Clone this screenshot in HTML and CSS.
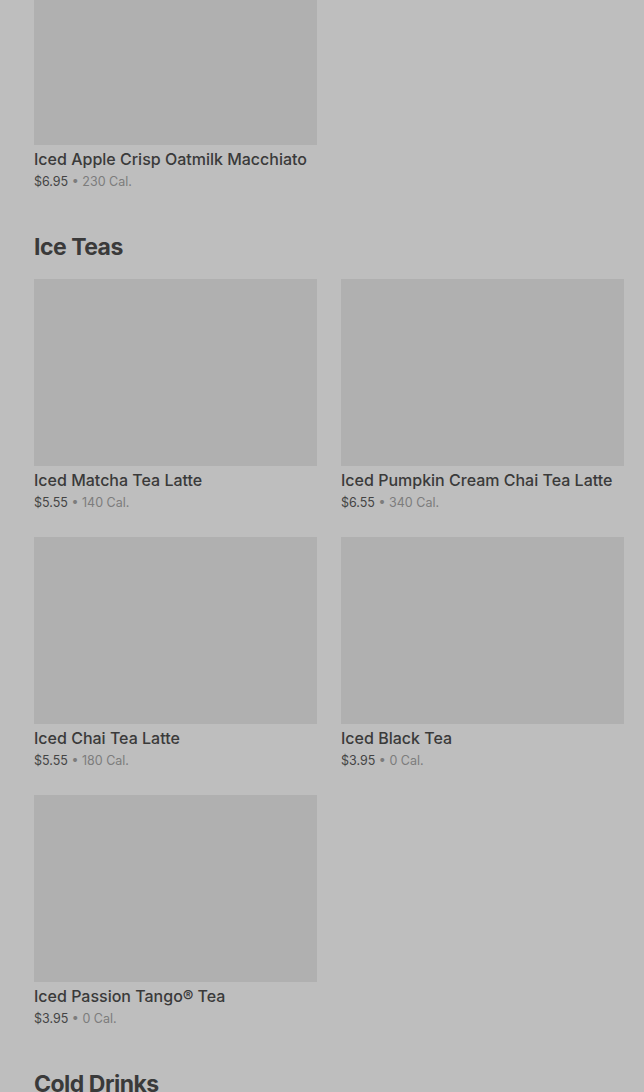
FILE: index.html
```html
<!DOCTYPE html>
<html lang="en">
<head>
    <meta charset="UTF-8">
    <title>Menu</title>
    <link rel="stylesheet" href="styles.css">
</head>
<body>
    <div class="menu">
        <section class="section first">
            <div class="grid">
                <div class="item">
                    <div class="thumb"></div>
                    <div class="name">Iced Apple Crisp Oatmilk Macchiato</div>
                    <div class="meta"><span class="price">$6.95</span> • 230 Cal.</div>
                </div>
            </div>
        </section>

        <section class="section">
            <h2>Ice Teas</h2>
            <div class="grid">
                <div class="item">
                    <div class="thumb"></div>
                    <div class="name">Iced Matcha Tea Latte</div>
                    <div class="meta"><span class="price">$5.55</span> • 140 Cal.</div>
                </div>
                <div class="item">
                    <div class="thumb"></div>
                    <div class="name">Iced Pumpkin Cream Chai Tea Latte</div>
                    <div class="meta"><span class="price">$6.55</span> • 340 Cal.</div>
                </div>
                <div class="item">
                    <div class="thumb"></div>
                    <div class="name">Iced Chai Tea Latte</div>
                    <div class="meta"><span class="price">$5.55</span> • 180 Cal.</div>
                </div>
                <div class="item">
                    <div class="thumb"></div>
                    <div class="name">Iced Black Tea</div>
                    <div class="meta"><span class="price">$3.95</span> • 0 Cal.</div>
                </div>
                <div class="item">
                    <div class="thumb"></div>
                    <div class="name">Iced Passion Tango® Tea</div>
                    <div class="meta"><span class="price">$3.95</span> • 0 Cal.</div>
                </div>
            </div>
        </section>

        <section class="section">
            <h2>Cold Drinks</h2>
        </section>
    </div>
</body>
</html>
```

FILE: styles.css
```css
body {
    margin: 0;
    padding: 0;
    background-color: #bebebe;
    font-family: Inter, "Noto Sans", sans-serif;
    color: #383838;
    height: 1092px;
    overflow: hidden;
}

.menu {
    padding: 0 20px 0 34px;
}

.section.first {
    margin-top: -42px;
}

.section h2 {
    margin: 41px 0 16px;
    font-size: 23px;
    line-height: 32px;
    font-weight: 700;
    letter-spacing: -0.5px;
    color: #3a3a3a;
}

.grid {
    display: grid;
    grid-template-columns: 283px 283px;
    column-gap: 24px;
    row-gap: 26px;
}

.thumb {
    height: 187px;
    background-color: #b0b0b0;
}

.name {
    margin-top: 4px;
    font-size: 16px;
    line-height: 20px;
    font-weight: 500;
    color: #3a3a3a;
    white-space: nowrap;
}

.meta {
    margin-top: 5px;
    font-size: 12.5px;
    line-height: 16px;
    color: #7c7c7c;
}

.price {
    color: #444;
}
```
